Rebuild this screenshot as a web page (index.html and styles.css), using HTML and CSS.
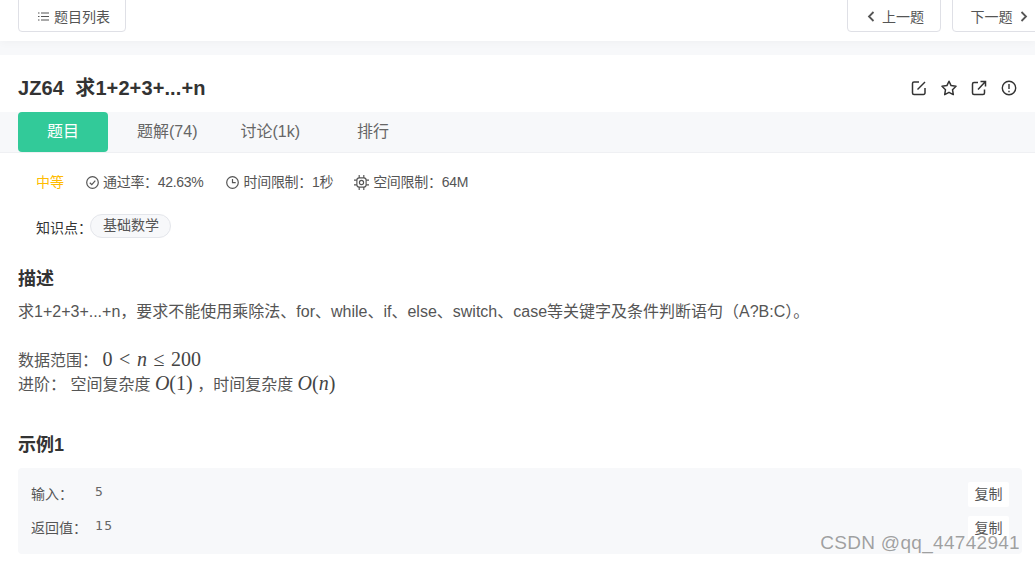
FILE: index.html
```html
<!DOCTYPE html>
<html lang="zh">
<head>
    <meta charset="UTF-8">
    <meta name="viewport" content="width=device-width, initial-scale=1.0">
    <title>JZ64 求1+2+3+...+n</title>
    <link rel="stylesheet" href="styles.css">
</head>
<body>

    <div class="topbar">
        <a class="btn btn-list">
            <svg class="ico-list" width="11" height="9" viewBox="0 0 11 9" fill="none" stroke="#555" stroke-width="1"><path d="M0 1h1.500M3 1h8M0 4.500h1.500M3 4.500h8M0 8h1.500M3 8h8"/></svg>
            题目列表
        </a>
        <div class="pager">
            <a class="btn btn-prev">
                <svg width="8" height="11" viewBox="0 0 8 11" fill="none" stroke="#555" stroke-width="1.800"><path d="M6.500 1L2 5.500l4.500 4.500"/></svg>
                上一题
            </a>
            <a class="btn btn-next">
                下一题
                <svg width="8" height="11" viewBox="0 0 8 11" fill="none" stroke="#555" stroke-width="1.800"><path d="M1.500 1L6 5.500 1.500 10"/></svg>
            </a>
        </div>
    </div>

    <div class="panel">
        <div class="title-row">
            <h1>JZ64&nbsp; 求1+2+3+...+n</h1>
            <div class="actions">
                <svg width="16" height="16" viewBox="0 0 16 16" fill="none" stroke="#333" stroke-width="1.500"><path d="M8 2H3a1.500 1.500 0 0 0-1.500 1.500v9.500A1.500 1.500 0 0 0 3 14.500h9.500A1.500 1.500 0 0 0 14 13V8"/><path d="M6.500 9.500L14 2"/></svg>
                <svg width="16" height="16" viewBox="0 0 16 16" fill="none" stroke="#333" stroke-width="1.500" stroke-linejoin="round"><path d="M8 1.200l2.100 4.400 4.900.7-3.500 3.400.8 4.900L8 12.300l-4.300 2.300.8-4.900L1 6.300l4.900-.7z"/></svg>
                <svg width="16" height="16" viewBox="0 0 16 16" fill="none" stroke="#333" stroke-width="1.500"><path d="M7 2.500H3A1.500 1.500 0 0 0 1.500 4v9A1.500 1.500 0 0 0 3 14.500h9a1.500 1.500 0 0 0 1.500-1.500V9.500"/><path d="M7 9.500L14 2M9.500 1.500h5v5"/></svg>
                <svg width="16" height="16" viewBox="0 0 16 16" fill="none" stroke="#333" stroke-width="1.400"><circle cx="8" cy="8" r="6.700"/><path d="M8 4v5M8 10.800v1.400"/></svg>
            </div>
        </div>

        <div class="tabs">
            <a class="tab active">题目</a>
            <a class="tab tab-solution">题解(74)</a>
            <a class="tab tab-discuss">讨论(1k)</a>
            <a class="tab tab-rank">排行</a>
        </div>

        <div class="meta">
            <span class="level">中等</span>
            <span class="meta-item">
                <svg width="13" height="13" viewBox="0 0 13 13" fill="none" stroke="#555" stroke-width="1.200"><circle cx="6.500" cy="6.500" r="5.800"/><path d="M3.800 6.800l2 1.900 3.500-4"/></svg>
                通过率：42.63%
            </span>
            <span class="meta-item">
                <svg width="13" height="13" viewBox="0 0 13 13" fill="none" stroke="#555" stroke-width="1.200"><circle cx="6.500" cy="6.500" r="5.800"/><path d="M6.500 3v3.700h3.200"/></svg>
                时间限制：1秒
            </span>
            <span class="meta-item meta-mem">
                <svg width="15" height="15" viewBox="0 0 13 13" fill="none" stroke="#555" stroke-width="1"><rect x="2.500" y="2.500" width="8" height="8" rx="2"/><circle cx="6.500" cy="6.500" r="1.800"/><path d="M4.500 0v2.500M8.500 0v2.500M4.500 10.500V13M8.500 10.500V13M0 4.500h2.500M0 8.500h2.500M10.500 4.500H13M10.500 8.500H13"/></svg>
                空间限制：64M
            </span>
        </div>

        <div class="tags">
            <span class="tags-label">知识点：</span>
            <span class="tag">基础数学</span>
        </div>

        <h2 class="desc-title">描述</h2>
        <p class="desc">求1+2+3+...+n，要求不能使用乘除法、for、while、if、else、switch、case等关键字及条件判断语句（A?B:C）。</p>
        <div class="desc-extra">
            <div class="math-line">数据范围： <span class="math">0 &lt; <i>n</i> ≤ 200</span></div>
            <div class="math-line">进阶： 空间复杂度 <span class="math"><i>O</i>(1)</span> ，时间复杂度 <span class="math"><i>O</i>(<i>n</i>)</span></div>
        </div>

        <h2 class="example-title">示例1</h2>
        <div class="example">
            <div class="example-row">
                <span class="example-label">输入：</span>
                <code>5</code>
                <a class="copy">复制</a>
            </div>
            <div class="example-row">
                <span class="example-label">返回值：</span>
                <code>15</code>
                <a class="copy">复制</a>
            </div>
        </div>
    </div>

    <div class="watermark">CSDN @qq_44742941</div>

</body>
</html>
```

FILE: styles.css
```css
html, body {
    height: 100%;
}

body {
    margin: 0;
    background-color: #f7f8fa;
    font-family: "Liberation Sans", "Noto Sans CJK SC", sans-serif;
    font-size: 14px;
    color: #555;
    position: relative;
    overflow: hidden;
}

/* Top bar, buttons are cut by the window edge */
.topbar {
    height: 41px;
    box-sizing: border-box;
    padding: 0 0 9px 18px;
    background-color: #fff;
    display: flex;
    justify-content: space-between;
    align-items: flex-end;
    box-shadow: 0 2px 8px rgba(0, 0, 0, 0.03);
}

.btn {
    height: 40px;
    box-sizing: border-box;
    border: 1px solid #dfe0e6;
    border-radius: 4px;
    display: flex;
    align-items: center;
    justify-content: center;
    gap: 7px;
    padding-top: 8px;
    font-size: 14px;
    color: #555;
    background-color: #fff;
}

.btn-list { width: 108px; gap: 5px; padding-left: 4px; }
.btn-prev { width: 94px; padding-left: 3px; }
.btn-next { width: 94px; margin-right: -11px; }

.pager {
    display: flex;
    gap: 11px;
}

/* Main panel */
.panel {
    margin-top: 14px;
    background-color: #fff;
    height: 507px;
}

.title-row {
    height: 57px;
    padding: 0 18px;
    display: flex;
    justify-content: space-between;
    align-items: center;
}

h1 {
    margin: 8px 0 0;
    font-size: 20px;
    line-height: 28px;
    font-weight: bold;
    letter-spacing: 0.1px;
    color: #333;
}

.actions {
    display: flex;
    gap: 14px;
    margin: 8px 0 0;
}

.tabs {
    height: 40px;
    padding-left: 18px;
    background-color: #f7f8fa;
    border-bottom: 1px solid #eff0f3;
    display: flex;
    align-items: center;
    font-size: 16px;
    color: #666;
}

.tab {
    text-align: center;
    line-height: 40px;
}

.tab.active {
    width: 90px;
    height: 40px;
    background-color: #32ca99;
    color: #fff;
    border-radius: 4px;
}

.tab-solution { margin-left: 29px; }
.tab-discuss { margin-left: 43px; }
.tab-rank { margin-left: 57px; }

.meta {
    padding: 19px 0 0 36px;
    height: 20px;
    display: flex;
    align-items: center;
    font-size: 14px;
    line-height: 20px;
    letter-spacing: -0.3px;
    color: #555;
}

.level {
    color: #ffbc00;
    margin-right: 22px;
    letter-spacing: 0;
}

.meta-item {
    display: flex;
    align-items: center;
    gap: 4px;
    margin-right: 23px;
}

.meta-mem {
    margin-left: -2px;
}

.tags {
    margin-top: 23px;
    padding-left: 36px;
    display: flex;
    align-items: center;
    height: 24px;
    font-size: 14px;
    color: #333;
}

.tag {
    height: 24px;
    line-height: 21px;
    box-sizing: border-box;
    padding: 0 11px 0 12px;
    margin-left: -2px;
    margin-top: -3px;
    background-color: #f7f8fa;
    border: 1px solid #e4e6eb;
    border-radius: 12px;
    font-size: 14px;
    color: #555;
}

h2 {
    margin: 0;
    padding-left: 18px;
    font-size: 18px;
    line-height: 24px;
    font-weight: bold;
    color: #333;
}

.desc-title {
    margin-top: 28px;
}

.desc {
    margin: 11px 0 0;
    padding-left: 18px;
    font-size: 16px;
    line-height: 20px;
}

.desc-extra {
    margin-top: 25px;
    padding-left: 18px;
    font-size: 16px;
}

.math-line {
    height: 24px;
    line-height: 24px;
    white-space: pre;
}

.math {
    font-family: "Liberation Serif", serif;
    font-size: 20px;
    word-spacing: 1.600px;
    color: #444;
}

.example-title {
    margin-top: 38px;
}

.example {
    margin: 11px 13px 0 18px;
    height: 86px;
    box-sizing: border-box;
    padding: 8px 13px 0 13px;
    background-color: #f7f8fa;
    border-radius: 4px;
}

.example-row {
    height: 34px;
    display: flex;
    align-items: flex-start;
    font-size: 14px;
}

.example-label {
    width: 64px;
    line-height: 20px;
    padding-top: 8px;
}

code {
    flex: 1;
    font-family: "DejaVu Sans Mono", monospace;
    font-size: 13px;
    line-height: 16px;
    letter-spacing: 1.400px;
    padding-top: 8px;
    color: #666;
}

.copy {
    width: 41px;
    height: 25px;
    margin-top: 6px;
    background-color: #fff;
    border-radius: 2px;
    font-size: 14px;
    line-height: 24px;
    text-align: center;
    color: #555;
}

/* Watermark lies over the example box */
.watermark {
    position: absolute;
    right: 15px;
    bottom: 8px;
    font-family: "Liberation Sans", sans-serif;
    font-size: 19px;
    line-height: 22px;
    letter-spacing: 0.300px;
    color: rgba(100, 100, 100, 0.6);
}
```
